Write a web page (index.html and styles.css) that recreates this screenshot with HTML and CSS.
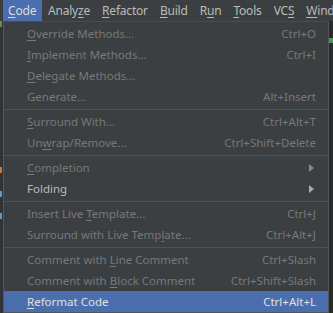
FILE: index.html
```html
<!DOCTYPE html>
<html>
<head>
<meta charset="utf-8">
<link rel="stylesheet" href="styles.css">
</head>
<body>
<div class="menubar">
  <span class="top active"><u>C</u>ode</span>
  <span class="top">Analy<u>z</u>e</span>
  <span class="top"><u>R</u>efactor</span>
  <span class="top"><u>B</u>uild</span>
  <span class="top">R<u>u</u>n</span>
  <span class="top"><u>T</u>ools</span>
  <span class="top">VC<u>S</u></span>
  <span class="top last"><u>W</u>ind</span>
</div>
<div class="area">
  <div class="gutter">
    <span class="mark m1"></span>
    <span class="mark m2"></span>
    <span class="mark m3"></span>
    <span class="mark m4"></span>
  </div>
  <div class="popup">
    <div class="item"><span><u>O</u>verride Methods...</span><span>Ctrl+O</span></div>
    <div class="item"><span><u>I</u>mplement Methods...</span><span>Ctrl+I</span></div>
    <div class="item"><span><u>D</u>elegate Methods...</span><span></span></div>
    <div class="item"><span>Generate...</span><span>Alt+Insert</span></div>
    <div class="sep"></div>
    <div class="item"><span><u>S</u>urround With...</span><span>Ctrl+Alt+T</span></div>
    <div class="item"><span>Un<u>w</u>rap/Remove...</span><span>Ctrl+Shift+Delete</span></div>
    <div class="sep"></div>
    <div class="item"><span><u>C</u>ompletion</span><span class="arrow"></span></div>
    <div class="item on"><span>Folding</span><span class="arrow"></span></div>
    <div class="sep"></div>
    <div class="item"><span>Insert Live <u>T</u>emplate...</span><span>Ctrl+J</span></div>
    <div class="item"><span>Surround with Live Temp<u>l</u>ate...</span><span>Ctrl+Alt+J</span></div>
    <div class="sep"></div>
    <div class="item"><span>Comment with <u>L</u>ine Comment</span><span>Ctrl+Slash</span></div>
    <div class="item"><span>Comment with <u>B</u>lock Comment</span><span>Ctrl+Shift+Slash</span></div>
    <div class="item sel"><span><u>R</u>eformat Code</span><span>Ctrl+Alt+L</span></div>
  </div>
  <div class="rside">
    <span class="gmark"></span>
  </div>
</div>
</body>
</html>
```
FILE: styles.css
```css
html, body {
  margin: 0;
  padding: 0;
  background: #2b2b2b;
  overflow: hidden;
  font-family: "Noto Sans", "Open Sans", sans-serif;
  font-size: 11.5px;
}
.menubar {
  height: 21px;
  background: #3c3f41;
  display: flex;
  white-space: nowrap;
  padding-left: 3px;
  color: #bbbbbb;
  overflow: hidden;
  font-size: 12px;
}
.top {
  line-height: 21px;
  padding: 0 6px;
  letter-spacing: -0.2px;
}
.top.last {
  padding-right: 0;
}
.top.active {
  background: #4b6eaf;
  color: #dddddd;
  padding: 0 6px 0 5px;
  width: 28px;
}
u {
  text-decoration: underline;
  text-underline-offset: 2px;
}
.area {
  display: flex;
}
.gutter {
  width: 3px;
  background: #313335;
  position: relative;
}
.mark {
  position: absolute;
  left: 0;
  width: 2px;
  height: 6px;
}
.m1 { top: 0; background: #6a8759; }
.m2 { top: 146px; background: #cc7832; }
.m3 { top: 170px; background: #6897bb; }
.m4 { top: 192px; background: #6897bb; }
.popup {
  width: 324px;
  background: #3c3f41;
  border: 1px solid #515658;
  border-top: 1px solid #4a4d4f;
  padding: 1px 0 0 0;
  color: #787878;
}
.item {
  height: 21px;
  display: flex;
  justify-content: space-between;
  align-items: center;
  padding: 0 12px 0 23px;
  white-space: nowrap;
}
.item.on { color: #bbbbbb; }
.item.sel {
  background: #4b6eaf;
  color: #e0e0e0;
}
.sep {
  height: 4px;
  display: flex;
  align-items: center;
}
.sep::before {
  content: "";
  display: block;
  width: 100%;
  height: 1px;
  background: #515151;
}
.arrow {
  width: 0;
  height: 0;
  border-top: 4px solid transparent;
  border-bottom: 4px solid transparent;
  border-left: 5px solid #888888;
  margin-right: 2px;
}
.item.on .arrow { border-left-color: #aaaaaa; }
.rside {
  flex: 1;
  background: #2b2b2b;
  position: relative;
}
.gmark {
  position: absolute;
  top: 17px;
  left: 0;
  width: 4px;
  height: 5px;
  background: #499c54;
}
```
